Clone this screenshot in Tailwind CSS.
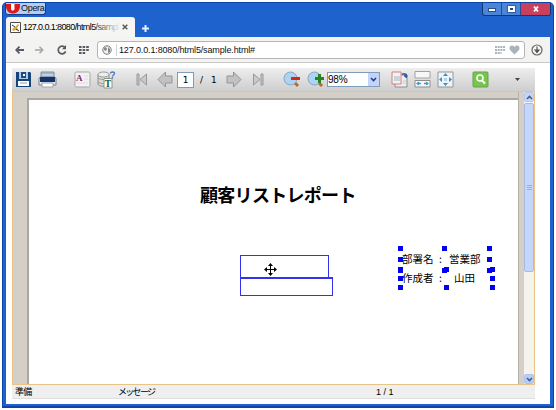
<!DOCTYPE html>
<html lang="ja"><head><meta charset="utf-8"><title>Opera</title>
<script src="https://cdn.jsdelivr.net/npm/@tailwindcss/browser@4"></script></head>
<body class="w-[556px] h-[410px] overflow-hidden bg-white pl-[2px] pt-[2px] font-['Liberation_Sans','Noto_Sans_CJK_JP',sans-serif] text-black">
<div class="relative w-[552px] h-[406px] rounded-t-[5px] bg-[#1d62cd] border-x border-b-2 border-t border-[#0b46a8] px-[3px] pb-[2px] flex flex-col">
  <header class="h-[34px] shrink-0 flex flex-col">
    <div class="h-[14px] flex justify-between">
      <div class="w-[41px] h-[12px] -ml-px rounded-b-[3px] bg-[#b5cdf3] border border-t-0 border-[#103f91] flex items-center">
        <svg class="w-[14px] h-[10px] shrink-0" viewBox="0 0 14 10"><path d="M0 0h14v2c0 10-14 10-14 0z" fill="#d91c18"/><path d="M5 0h3.500v5c0 2-3.500 2-3.500 0z" fill="#fff"/></svg>
        <span class="ml-px text-[9px] leading-[11px] tracking-[-0.3px] text-[#111]">Opera</span>
      </div>
      <div class="h-[13px] w-[69px] -mr-px flex rounded-b-[3px] overflow-hidden border border-t-0 border-[#16366f] bg-[#4a85d8]">
        <div class="w-[19px] border-r border-[#244d91] flex items-center justify-center pt-[2px]"><div class="w-[8px] h-[4px] bg-white border border-[#294f8c]"></div></div>
        <div class="w-[19px] border-r border-[#244d91] flex items-center justify-center"><div class="w-[7px] h-[6px] border-2 border-white bg-[#234780] outline outline-[#345e9d]"></div></div>
        <div class="flex-1 bg-[#c9405d] flex items-center justify-center"><svg class="w-[8px] h-[8px]" viewBox="0 0 8 8"><path d="M2 1.5l4 5M6 1.5l-4 5" stroke="#fff" stroke-width="1.8"/></svg></div>
      </div>
    </div>
    <div class="h-[20px] flex">
      <div class="w-[129px] h-[20px] rounded-t-[3px] bg-[#f5f5f4] flex items-center pl-[4px]">
        <svg class="w-[11px] h-[11px] shrink-0" viewBox="0 0 11 11"><path d="M.5.5h10v10H.5z" fill="#fff" stroke="#4b4b4b"/><path d="M2 7l3-2 3-3 1 1-2 3 2 3-3-1-3 1z" fill="#dba633"/><path d="M2 3l3 2M6 7l3 2" stroke="#333"/></svg>
        <div class="relative ml-[2px] w-[98px] overflow-hidden whitespace-nowrap text-[9px] leading-[13px] tracking-[-0.6px]">127.0.0.1:8080/html5/sampl<div class="absolute inset-y-0 right-0 w-[30px] bg-linear-to-r from-[#f5f5f4]/0 to-[#f5f5f4]"></div></div>
        <svg class="w-[6px] h-[6px] ml-[1px] shrink-0" viewBox="0 0 6 6"><path d="M.7.7l4.6 4.6M5.3.7L.7 5.3" stroke="#555" stroke-width="1.4"/></svg>
      </div>
      <svg class="w-[7px] h-[7px] ml-[7px] mt-[8px]" viewBox="0 0 7 7"><path d="M3.5 0v7M0 3.5h7" stroke="#e5eefb" stroke-width="2"/></svg>
    </div>
  </header>
  <nav class="h-[26px] shrink-0 bg-[#f3f3f2] border-b border-[#c9c9c9] flex items-center text-[#666]">
    <svg class="w-[9px] h-[8px] ml-[9px]" viewBox="0 0 9 8"><path d="M9 4H1.5M4.5.7L1.2 4l3.3 3.3" fill="none" stroke="#555c63" stroke-width="1.8"/></svg>
    <svg class="w-[9px] h-[8px] ml-[11px]" viewBox="0 0 9 8"><path d="M0 4h7.5M4.5.7L7.8 4 4.5 7.3" fill="none" stroke="#a3a7aa" stroke-width="1.5"/></svg>
    <svg class="w-[10px] h-[10px] ml-[13px]" viewBox="0 0 10 10"><path d="M8 2.6A3.8 3.8 0 1 0 8.6 6.4" fill="none" stroke="#555c63" stroke-width="1.7"/><path d="M9 0v4.3H5z" fill="#555c63"/></svg>
    <svg class="w-[10px] h-[8px] ml-[12px]" viewBox="0 0 10 8"><path d="M0 1h10M0 4h10M0 7h6.5" stroke="#555c63" stroke-width="2" stroke-dasharray="2.6 1"/></svg>
    <div class="ml-[8px] w-[428px] h-[18px] bg-white border border-[#b5b5b5] rounded-[3px] flex items-center">
      <svg class="w-[10px] h-[10px] ml-[4px]" viewBox="0 0 10 10"><circle cx="5" cy="5" r="4.2" fill="#f4f4f4" stroke="#777"/><path d="M2 3l2-1 1 2-1 2-2-1zM6 2l2 2v3L6 8V5z" fill="#888"/></svg>
      <div class="w-px h-[12px] bg-[#d3d3d3] ml-[4px]"></div>
      <span class="ml-[2px] w-[341px] text-[9px] leading-[14px] tracking-[-0.14px] text-[#111]">127.0.0.1:8080/html5/sample.html#</span>
      <svg class="w-[10px] h-[8px] ml-[35px] shrink-0" viewBox="0 0 10 8"><path d="M0 1h10M0 4h10M0 7h6.5" stroke="#a9b3b8" stroke-width="2" stroke-dasharray="2 .7"/></svg>
      <svg class="w-[11px] h-[10px] ml-[4px] shrink-0" viewBox="0 0 11 10"><path d="M5.5 9.5L1 5C-1 1 3-1 5.5 2 8-1 12 1 10 5z" fill="#a8b4ba"/></svg>
    </div>
    <svg class="w-[12px] h-[12px] ml-[6px] shrink-0" viewBox="0 0 12 12"><circle cx="6" cy="6" r="5" fill="#f8f8f8" stroke="#666" stroke-width="1.2"/><path d="M6 2.5v6M4 6l2 2.6L8 6z" stroke="#555" stroke-width="1.2" fill="#555"/></svg>
  </nav>
  <main class="flex-1 bg-white pl-[6px] pt-[5px]">
    <div class="w-[523px] h-[24px] bg-linear-to-b from-[#eeeeee] to-[#cecece] border-b border-[#e7c384] flex items-center">
      <svg class="w-[17px] h-[17px] ml-[3px] shrink-0" viewBox="0 0 17 17"><path d="M1 1h14l1 1v14H1z" fill="#17437d"/><path d="M4 1h9v7H4z" fill="#a9cbe6"/><path d="M6 1h5v6H6z" fill="#1e4b80"/><path d="M8 3h2v2H8zM3 10h11v5H3z" fill="#fff"/><path d="M5 12h7" stroke="#999"/></svg>
      <svg class="w-[19px] h-[17px] ml-[6px] shrink-0" viewBox="0 0 19 17"><path d="M3 1h13v6H3z" fill="#a8b8ca" stroke="#8294a8"/><path d="M1 7l2-1h13l2 1v7H1z" fill="#e6e9ec" stroke="#778495"/><path d="M2 6h15v5H2z" fill="#17336e"/><path d="M4 12h11v4H4z" fill="#fff" stroke="#9aa5b1"/><path d="M4 4h11" stroke="#dbe8f2"/></svg>
      <svg class="w-[17px] h-[17px] ml-[17px] shrink-0" viewBox="0 0 17 17"><rect x="1" y="1" width="15" height="15" rx="1.5" fill="#f3f1f2" stroke="#a7a7a7"/><text x="2" y="9.5" font-family="Liberation Serif" font-weight="700" font-size="9" fill="#801c72">A</text><path d="M10 5h4M10 8h4M3 12h11" stroke="#ddd"/></svg>
      <svg class="w-[19px] h-[18px] ml-[6px] shrink-0" viewBox="0 0 19 18"><path d="M1 3v10c0 3 11 3 11 0V3" fill="#d8d8d7" stroke="#8f8f8f"/><ellipse cx="6.500" cy="3.500" rx="5.500" ry="2.500" fill="#ededed" stroke="#999"/><path d="M1 7c2 2 9 2 11 0M1 11c2 2 9 2 11 0" fill="none" stroke="#999"/><path d="M7 7.500h8v9.500H7z" fill="#fff" stroke="#8b978b"/><text x="7.800" y="15.500" font-family="Liberation Serif" font-weight="700" font-size="9.500" fill="#175c27">T</text><path d="M13.500 2.500c0-2 4-2 4 0 0 1.500-2 1.500-2 3M15.500 6v1.500" fill="none" stroke="#5379c5" stroke-width="1.400"/></svg>
      <svg class="w-[12px] h-[13px] ml-[20px] shrink-0" viewBox="0 0 12 13"><path d="M1 1h2v11H1zM10.500 1v11L4 6.500z" fill="#c9c9c9" stroke="#999"/></svg>
      <svg class="w-[17px] h-[17px] ml-[9px] shrink-0" viewBox="0 0 17 17"><path d="M1 8.500L8.500 1v4H15v7H8.500v4z" fill="#c2c2c2" stroke="#959595"/></svg>
      <div class="w-[17px] h-[16px] ml-[3px] shrink-0 border border-[#7f9db9] bg-white text-[9px] leading-[15px] text-center font-['DejaVu_Sans']">1</div>
      <span class="ml-[6px] w-[25px] shrink-0 whitespace-nowrap text-[9px] leading-[15px] font-['DejaVu_Sans'] pt-[2px]">/<span class="ml-[8px]">1</span></span>
      <svg class="w-[17px] h-[17px] ml-0 shrink-0" viewBox="0 0 17 17"><path d="M16 8.500L8.500 1v4H2v7h6.500v4z" fill="#c2c2c2" stroke="#959595"/></svg>
      <svg class="w-[12px] h-[13px] ml-[10px] shrink-0" viewBox="0 0 12 13"><path d="M9 1h2v11H9zM1.500 1v11L8 6.500z" fill="#c9c9c9" stroke="#999"/></svg>
      <svg class="w-[18px] h-[17px] ml-[19px] shrink-0" viewBox="0 0 18 17"><path d="M11 11l4 4" stroke="#a96f33" stroke-width="3"/><circle cx="7.500" cy="7.500" r="6.500" fill="#acd4f2" stroke="#80a9cc"/><path d="M8 7.500h9" stroke="#dc2412" stroke-width="3"/></svg>
      <svg class="w-[18px] h-[17px] ml-[6px] shrink-0" viewBox="0 0 18 17"><path d="M11 11l4 4" stroke="#a96f33" stroke-width="3"/><circle cx="7.500" cy="7.500" r="6.500" fill="#acd4f2" stroke="#80a9cc"/><path d="M8 7.500h9M12.500 3v9" stroke="#248324" stroke-width="3"/></svg>
      <div class="w-[53px] h-[15px] ml-[2px] shrink-0 border border-[#7f9db9] bg-white flex justify-between items-center text-[10px] leading-[13px]"><span class="tracking-[-0.2px]">98%</span><div class="w-[11px] h-[13px] bg-[#c3d3fb] flex items-center justify-center"><svg class="w-[7px] h-[5px]" viewBox="0 0 7 5"><path d="M1 1l2.500 2.500L6 1" fill="none" stroke="#24416f" stroke-width="1.600"/></svg></div></div>
      <svg class="w-[17px] h-[17px] ml-[11px] shrink-0" viewBox="0 0 17 17"><path d="M6 4h10v12H4v-3z" fill="#eee" stroke="#8e8e8e"/><path d="M1 1h9v12H1z" fill="#f5f1f1" stroke="#d18080"/><path d="M3 5h6v5H3z" fill="#c9d4dc"/><path d="M11 3h3v3M14 3c2 0 2 2 1 4" fill="none" stroke="#3258a0" stroke-width="1.500"/><path d="M12 9h3v4h-4" fill="#d8e0e6"/></svg>
      <svg class="w-[17px] h-[17px] ml-[6px] shrink-0" viewBox="0 0 17 17"><path d="M1 .5h15V7H1z" fill="#f7f7f7" stroke="#a2a2a2"/><path d="M1 9.500h15v6.500H1z" fill="#f7f7f7" stroke="#8e8e8e"/><path d="M3 12.500h4M10 12.500h4" stroke="#4697c5" stroke-width="1.500"/><path d="M5 10.500l-3 2 3 2zM12 10.500l3 2-3 2z" fill="#4697c5"/></svg>
      <svg class="w-[17px] h-[17px] ml-[6px] shrink-0" viewBox="0 0 17 17"><path d="M1 1h15v15H1z" fill="#f0f4f7" stroke="#969696"/><path d="M8.500 2L11 5H6zM8.500 15L6 12h5zM2 8.500L5 6v5zM15 8.500L12 6v5z" fill="#3993c7"/><path d="M7 7h3v3H7z" fill="#b8d5e6"/></svg>
      <svg class="w-[17px] h-[17px] ml-[18px] shrink-0" viewBox="0 0 17 17"><rect x="1" y="1" width="15" height="15" rx="1" fill="#76c64b" stroke="#67a34b"/><circle cx="8" cy="7" r="3" fill="none" stroke="#fff" stroke-width="1.600"/><path d="M10 9.500l3 3" stroke="#fff" stroke-width="2"/></svg>
      <svg class="w-[5px] h-[3px] ml-[26px] shrink-0" viewBox="0 0 5 3"><path d="M0 0h5L2.500 3z" fill="#444"/></svg>
    </div>
    <div class="w-[523px] h-[293px] bg-[#d4d0c8] border border-t-0 border-[#e9c486] flex">
      <div class="relative ml-[14px] mt-[6px] w-[491px] h-[286px] bg-white border-l-2 border-t-2 border-[#aaa8a4] shrink-0">
        <h1 class="pt-[81px] pl-[171px] whitespace-nowrap text-[18px] leading-[26px] font-bold font-['Noto_Sans_CJK_JP'] tracking-[-0.7px]">顧客リストレポート</h1>
        <div class="absolute left-[211px] top-[155px] w-[89px] h-[24px] border border-[#3232ee]"></div>
        <div class="absolute left-[211px] top-[177px] w-[93px] h-[19px] border border-[#3232ee] border-t-2"></div>
        <svg class="absolute left-[235px] top-[163px] w-[13px] h-[13px]" viewBox="0 0 13 13"><path d="M6.500 1v11M1 6.500h11" stroke="#000"/><path d="M6.500 0l2.500 3H4zM6.500 13L4 10h5zM0 6.500L3 4v5zM13 6.500L10 4v5z"/></svg>
        <div class="absolute left-[373px] top-[149px] whitespace-nowrap font-['Noto_Sans_CJK_JP'] text-[10.500px] leading-[19px]">
          <div class="flex"><span class="w-[32px]">部署名</span><span class="w-[15px] pl-[5px]">:</span><span>営業部</span></div>
          <div class="flex"><span class="w-[32px]">作成者</span><span class="w-[20px] pl-[5px]">:</span><span>山田</span></div>
        </div>
        <svg class="absolute left-[369px] top-[145px] w-[100px] h-[46px]" viewBox="0 0 100 46"><path fill="#0000f2" d="M0 1h5v5H0zM44 1h5v5h-5zM89 1h5v5h-5zM0 12h5v5H0zM89 12h5v5h-5zM0 23h5v5H0zM44 23h5v5h-5zM89 23h5v5h-5zM0 22h5v5H0zM46 22h5v5h-5zM92 22h5v5h-5zM0 31h5v5H0zM92 31h5v5h-5zM0 40h5v5H0zM46 40h5v5h-5zM92 40h5v5h-5z"/></svg>
      </div>
      <div class="w-[6px] shrink-0 border-l border-[#b5b1a9]"></div>
      <div class="w-[10px] flex flex-col bg-[#f4f3ed]">
        <div class="h-[10px] mb-px bg-[#c5d5fc] border border-[#b5c7ee] rounded-[2px] flex items-center justify-center"><svg class="w-[7px] h-[5px] shrink-0" viewBox="0 0 7 5"><path d="M1 4l2.500-2.500L6 4" fill="none" stroke="#405d8b" stroke-width="1.600"/></svg></div>
        <div class="h-[169px] bg-[#c5d5fc] border border-[#a8bcdf] rounded-[2px] flex flex-col items-center justify-center gap-px"><i class="w-[5px] h-px bg-[#8cb0f8]"></i><i class="w-[5px] h-px bg-[#8cb0f8]"></i><i class="w-[5px] h-px bg-[#8cb0f8]"></i></div>
        <div class="mt-auto h-[10px] bg-[#b7ccfa] border border-[#b0c4ee] rounded-[2px] flex items-center justify-center"><svg class="w-[7px] h-[5px] shrink-0" viewBox="0 0 7 5"><path d="M1 1l2.500 2.500L6 1" fill="none" stroke="#405d8b" stroke-width="1.600"/></svg></div>
      </div>
    </div>
    <footer class="w-[523px] h-[14px] bg-[#efefef] border-b border-[#dedede] flex items-center pl-[3px] pt-px text-[9px] leading-[13px] font-['Liberation_Sans','Noto_Sans_CJK_JP'] whitespace-nowrap"><span class="w-[103px] tracking-[-0.7px]">準備</span><span class="w-[258px] tracking-[-1.7px]">メッセージ</span><span>1 / 1</span></footer>
  </main>
</div>
</body></html>
